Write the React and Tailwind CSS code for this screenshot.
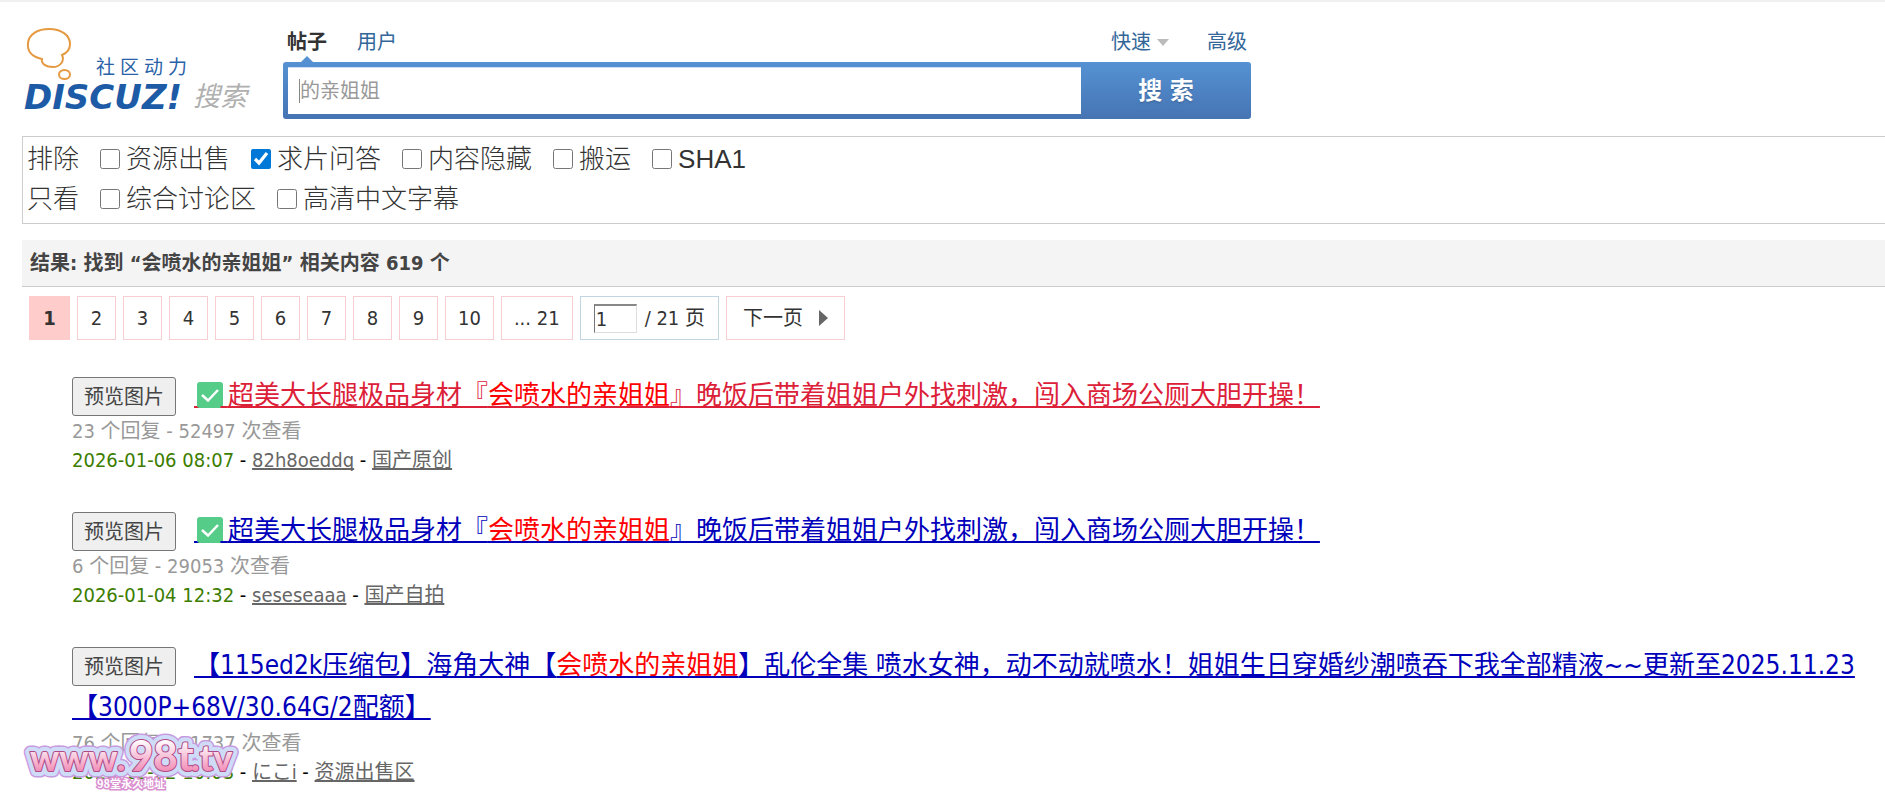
import { useState } from "react"

const EXCLUDE = ["资源出售", "求片问答", "内容隐藏", "搬运", "SHA1"];
const ONLY = ["综合讨论区", "高清中文字幕"];
const PAGES = ["2", "3", "4", "5", "6", "7", "8", "9", "10", "... 21"];

const RESULTS = [
    {
        id: 1,
        checked: true,
        before: "超美大长腿极品身材『",
        keyword: "会喷水的亲姐姐",
        after: "』晚饭后带着姐姐户外找刺激，闯入商场公厕大胆开操！",
        color: "text-[#dc2038]",
        stats: "23 个回复 - 52497 次查看",
        date: "2026-01-06 08:07",
        author: "82h8oeddq",
        forum: "国产原创",
    },
    {
        id: 2,
        checked: true,
        before: "超美大长腿极品身材『",
        keyword: "会喷水的亲姐姐",
        after: "』晚饭后带着姐姐户外找刺激，闯入商场公厕大胆开操！",
        color: "text-[#0000bb]",
        stats: "6 个回复 - 29053 次查看",
        date: "2026-01-04 12:32",
        author: "seseseaaa",
        forum: "国产自拍",
    },
    {
        id: 3,
        checked: false,
        before: "【115ed2k压缩包】海角大神【",
        keyword: "会喷水的亲姐姐",
        after: "】乱伦全集 喷水女神，动不动就喷水！姐姐生日穿婚纱潮喷吞下我全部精液~~更新至2025.11.23【3000P+68V/30.64G/2配额】",
        color: "text-[#0000bb]",
        stats: "76 个回复 - 11737 次查看",
        date: "2025-12-22 10:03",
        author: "にこi",
        forum: "资源出售区",
    },
];

function Logo() {
    return (
        <svg width="230" height="92" viewBox="0 0 230 92" role="img" aria-label="Discuz! 搜索">
            <g fill="none" stroke="#e59a42" strokeWidth="2">
                <path d="M18 33C8 31 3 25 4 17C5 8 14 3 25 3C37 3 46 9 46 18C46 24 43 27 38 29C41 35 36 41 29 41C22 41 17 38 18 33Z" />
                <ellipse cx="40.500" cy="48.500" rx="5.500" ry="4.500" />
            </g>
            <text x="72" y="48" fontSize="19" letterSpacing="5" fill="#2a62a8" className="font-['Noto_Sans_CJK_SC',sans-serif]">社区动力</text>
            <text x="0" y="83" fontSize="34" fill="#1d5ba6" className="font-['DejaVu_Sans',sans-serif] font-bold italic">DISCUZ!</text>
            <text x="169" y="80" fontSize="27" fill="#b0b0b0" className="font-['Noto_Sans_CJK_SC',sans-serif] italic">搜索</text>
        </svg>
    )
}

function FilterRow({ label, options, checked, onToggle }) {
    return (
        <div className="flex items-center h-10">
            <span>{label}</span>
            {options.map(option => (
                <label key={option} className="flex items-center gap-1.5 ml-[21px]">
                    <input
                        type="checkbox"
                        className="size-5 accent-[#0078d7]"
                        checked={checked.includes(option)}
                        onChange={() => onToggle(option)}
                    />
                    {option}
                </label>
            ))}
        </div>
    )
}

function CheckMark() {
    return (
        <>
            &nbsp;
            <svg width="26" height="26" viewBox="0 0 26 26" className="inline-block align-[-4px] -ml-1 -mr-[3px]" aria-hidden="true">
                <rect width="26" height="26" rx="3" fill="#55cd88" />
                <path d="M5 13L11 18.500L21 8" fill="none" stroke="#fff" strokeWidth="2.500" />
            </svg>
            &nbsp;
        </>
    )
}

function Result({ item }) {
    return (
        <li className="mb-[34px]">
            <h3 className="text-[26px] leading-[42px]">
                <button className="inline-block align-middle -my-2 h-[39px] w-[104px] mr-[18px] rounded-[3px] border border-[#767676] bg-[#efefef] text-xl leading-6 text-[#444]">
                    预览图片
                </button>
                <a href="#" className={`underline decoration-2 underline-offset-2 [text-decoration-skip-ink:none] ${item.color}`}>
                    {item.checked && <CheckMark />}
                    {item.before}
                    <span className="text-[#f00]">{item.keyword}</span>
                    {item.after}
                </a>
            </h3>
            <p className="mt-px leading-[29px] text-[#999]">{item.stats}</p>
            <p className="leading-[29px] text-black">
                <span className="text-[#3c7d00]">{item.date}</span>
                {" - "}
                <a href="#" className="text-[#666] underline [text-decoration-skip-ink:none]">{item.author}</a>
                {" - "}
                <a href="#" className="text-[#666] underline [text-decoration-skip-ink:none]">{item.forum}</a>
            </p>
        </li>
    )
}

function SiteMark() {
    return (
        <svg width="220" height="64" viewBox="0 0 220 64" className="absolute left-[22px] top-[728px]" role="img" aria-label="www.98t.tv">
            <defs>
                <linearGradient id="pink" x1="0" y1="0" x2="0" y2="1">
                    <stop offset="0.200" stopColor="#fff" />
                    <stop offset="0.900" stopColor="#f07fae" />
                </linearGradient>
            </defs>
            <g className="font-['Lato',sans-serif] font-black" strokeLinejoin="round">
                {[
                    { stroke: "#c79be0", width: 13 },
                    { stroke: "#cfdcf8", width: 10 },
                    { stroke: "#b04a86", width: 2 },
                    { stroke: "none", width: 0 },
                ].map(layer => (
                    <g key={layer.width} fill="url(#pink)" stroke={layer.stroke} strokeWidth={layer.width}>
                        <text x="8" y="41" fontSize="36">www.</text>
                        <text x="107" y="41" fontSize="42">98t</text>
                        <text x="169" y="41" fontSize="36">.tv</text>
                    </g>
                ))}
            </g>
            <g fontSize="11" className="font-['Noto_Sans_CJK_SC',sans-serif] font-bold">
                <text x="75" y="58" fill="#e86aa8" stroke="#d98fd0" strokeWidth="3">98堂永久地址</text>
                <text x="75" y="58" fill="#fff">98堂永久地址</text>
            </g>
        </svg>
    )
}

export default function App() {
    const [checked, setChecked] = useState(["求片问答"]);

    const toggle = (option) => {
        setChecked(checked.includes(option) ? checked.filter(i => i !== option) : [...checked, option]);
    };

    return (
        <div className="relative border-t-2 border-[#f0f0f0] bg-white text-xl text-[#333] font-['DejaVu_Sans_Condensed','Noto_Sans_CJK_SC',sans-serif]">
            <header className="flex pl-6 pt-6">
                <a href="#" className="w-[259px] shrink-0"><Logo /></a>
                <div className="w-[968px]">
                    <nav className="flex h-9 pt-0.5 pl-1 pr-1 leading-7 text-[#369]">
                        <a href="#" className="relative font-bold text-[#333]">
                            帖子
                            <span className="absolute left-3.5 top-7 border-x-6 border-b-6 border-x-transparent border-b-[#5690d0]" />
                        </a>
                        <a href="#" className="ml-[30px]">用户</a>
                        <a href="#" className="ml-auto flex items-center h-7">
                            快速
                            <span className="ml-1.5 border-x-6 border-t-7 border-x-transparent border-t-[#bbb]" />
                        </a>
                        <a href="#" className="ml-[38px]">高级</a>
                    </nav>
                    <form className="flex h-[57px] p-[5px] pr-0 rounded-[3px] bg-linear-to-b from-[#5592d3] to-[#4674b3]" onSubmit={(e) => e.preventDefault()}>
                        <div className="flex items-center flex-1 pl-[11px] bg-white border-t border-[#cfdcf5]">
                            <span className="w-px h-6 bg-[#888]" />
                            <input type="text" aria-label="搜索" defaultValue="的亲姐姐" className="w-full outline-none text-[#999]" />
                        </div>
                        <button type="submit" className="w-[170px] text-2xl font-bold text-white text-shadow-sm">搜 索</button>
                    </form>
                </div>
            </header>

            <main className="pl-[22px]">
                <section className="mt-[17px] h-[88px] pt-0.5 pl-1 border border-r-0 border-[#ccc] text-[26px] font-light font-['Liberation_Sans','Noto_Sans_CJK_SC',sans-serif]">
                    <FilterRow label="排除" options={EXCLUDE} checked={checked} onToggle={toggle} />
                    <FilterRow label="只看" options={ONLY} checked={checked} onToggle={toggle} />
                </section>

                <h2 className="mt-4 h-[47px] pl-2 leading-[46px] font-bold text-[#444] bg-[#f4f4f4] border-b border-[#ccc]">
                    结果: 找到 “会喷水的亲姐姐” 相关内容 619 个
                </h2>

                <div className="flex gap-[7px] mt-[9px] pl-[7px] leading-[42px]">
                    <strong className="w-[41px] text-center border border-[#fcc] bg-[#fcc]">1</strong>
                    {PAGES.map(page => (
                        <a key={page} href="#" className="min-w-[39px] px-3 text-center border border-[#f6cdd0]">{page}</a>
                    ))}
                    <label className="flex items-center gap-2 px-[13px] border border-[#c2d5e3]">
                        <input type="text" aria-label="页码" defaultValue="1" className="w-[43px] h-[29px] px-px border border-t-2 border-t-[#888] border-l-[#767676] border-r-[#ddd] border-b-[#ddd]" />
                        <span>/ 21 页</span>
                    </label>
                    <a href="#" className="flex items-center px-4 border border-[#f6cdd0]">
                        下一页
                        <span className="ml-4 border-y-8 border-l-9 border-y-transparent border-l-[#666]" />
                    </a>
                </div>

                <ul className="mt-[34px] pl-[50px] pr-2">
                    {RESULTS.map(item => <Result key={item.id} item={item} />)}
                </ul>
            </main>

            <SiteMark />
        </div>
    )
}
